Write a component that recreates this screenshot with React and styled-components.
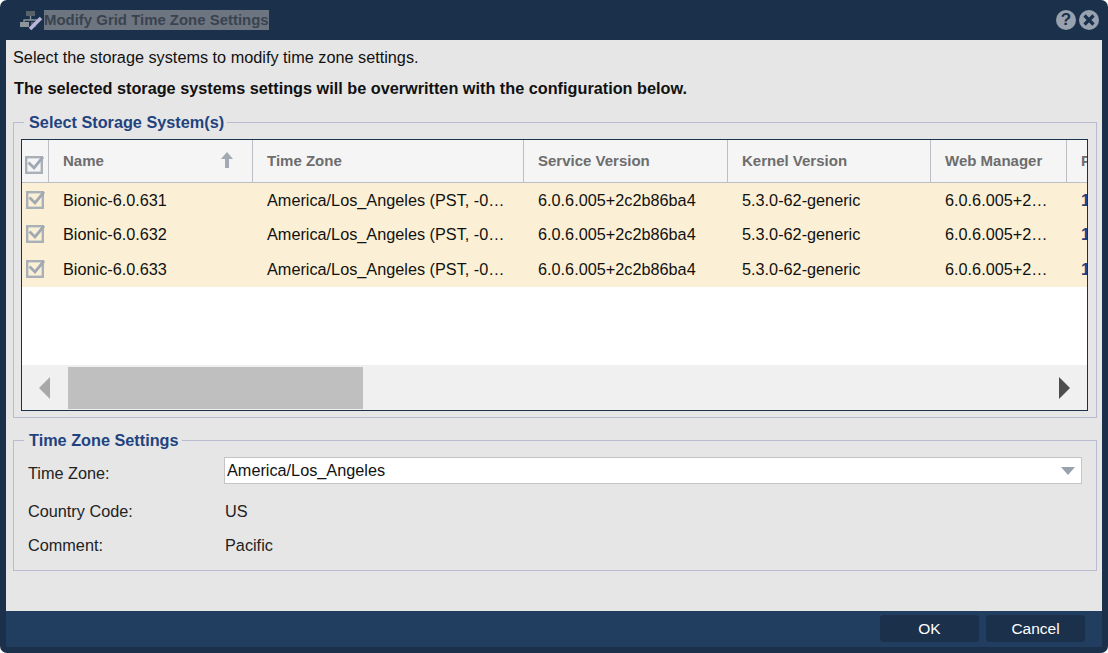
import React from 'react'
import styled, { createGlobalStyle } from 'styled-components'

const columns = '27px 204px 271px 204px 203px 136px 60px'

const rows = [
	{ name: 'Bionic-6.0.631' },
	{ name: 'Bionic-6.0.632' },
	{ name: 'Bionic-6.0.633' }
]

const CheckIcon = ({ size = 19 }) => (
	<svg width={size} height={size} viewBox="0 0 19 19">
		<rect x="1.2" y="2.2" width="15.6" height="15.6" fill="none" stroke="#a9b0b8" strokeWidth="2.4" />
		<path d="M3.5 7.5 L9 13 L18 2" fill="none" stroke="#a0a8b1" strokeWidth="2.8" />
	</svg>
)

const GridLogo = () => (
	<svg width="23" height="20" viewBox="0 0 23 20">
		<rect x="6" y="1" width="9" height="5" fill="#59616b" />
		<path d="M10.5 6 V10 M4 13 V10 H17 V11" fill="none" stroke="#8a929b" strokeWidth="1.4" />
		<rect x="0" y="12" width="9" height="5" fill="#8d949c" />
		<rect x="11" y="12" width="5" height="5" fill="#59616b" />
		<path d="M10 19 L21 8" stroke="#b9b4dc" strokeWidth="3.6" />
	</svg>
)

export default function App() {
	return (
		<>
			<GlobalStyle />
			<Dialog>
				<TitleBar>
					<TitleGroup>
						<GridLogo />
						<TitleText>Modify Grid Time Zone Settings</TitleText>
					</TitleGroup>
					<WindowButtons>
						<WindowButton>?</WindowButton>
						<WindowButton>
							<svg width="14" height="14" viewBox="0 0 14 14">
								<path d="M2.5 2.5 L11.5 11.5 M11.5 2.5 L2.5 11.5" stroke="#1a304b" strokeWidth="3.2" />
							</svg>
						</WindowButton>
					</WindowButtons>
				</TitleBar>

				<Content>
					<Intro>Select the storage systems to modify time zone settings.</Intro>
					<Warning>The selected storage systems settings will be overwritten with the configuration below.</Warning>

					<SystemsGroup>
						<GroupTitle $inset={3}>Select Storage System(s)</GroupTitle>
						<Table>
							<HeaderRow>
								<HeaderCheck><CheckIcon /></HeaderCheck>
								<HeaderCell>
									Name
									<svg width="14" height="18" viewBox="0 0 14 18">
										<path d="M7 1 L13 8 H9 V17 H5 V8 H1 Z" fill="#a2abb4" />
									</svg>
								</HeaderCell>
								<HeaderCell>Time Zone</HeaderCell>
								<HeaderCell>Service Version</HeaderCell>
								<HeaderCell>Kernel Version</HeaderCell>
								<HeaderCell>Web Manager</HeaderCell>
								<HeaderCell $last>P</HeaderCell>
							</HeaderRow>
							<Rows>
								{rows.map((row) => (
									<Row key={row.name}>
										<RowCheck><CheckIcon /></RowCheck>
										<Cell>{row.name}</Cell>
										<Cell>America/Los_Angeles (PST, -0…</Cell>
										<Cell>6.0.6.005+2c2b86ba4</Cell>
										<Cell>5.3.0-62-generic</Cell>
										<Cell>6.0.6.005+2…</Cell>
										<Cell $link>1</Cell>
									</Row>
								))}
							</Rows>
							<ScrollBar>
								<ArrowSlot $dir="left">
									<Arrow $dir="left" />
								</ArrowSlot>
								<ScrollTrack>
									<ScrollThumb />
								</ScrollTrack>
								<ArrowSlot $dir="right">
									<Arrow $dir="right" />
								</ArrowSlot>
							</ScrollBar>
						</Table>
					</SystemsGroup>

					<SettingsGroup>
						<GroupTitle $inset={-5}>Time Zone Settings</GroupTitle>
						<FormGrid>
							<FormLabel $offset>Time Zone:</FormLabel>
							<Combo>
								America/Los_Angeles
								<ComboArrow />
							</Combo>
							<FormLabel>Country Code:</FormLabel>
							<FormValue>US</FormValue>
							<FormLabel>Comment:</FormLabel>
							<FormValue>Pacific</FormValue>
						</FormGrid>
					</SettingsGroup>
				</Content>

				<Footer>
					<FooterButton>OK</FooterButton>
					<FooterButton>Cancel</FooterButton>
				</Footer>
			</Dialog>
		</>
	)
}

const GlobalStyle = createGlobalStyle`
  html, body {
    margin: 0;
    padding: 0;
    background: #fff;
  }
  * {
    box-sizing: border-box;
  }
`

const Dialog = styled.div`
  width: 1108px;
  height: 653px;
  display: flex;
  flex-direction: column;
  padding: 0 6px 6px;
  background: #1a304b;
  border-radius: 7px;
  overflow: hidden;
  font-family: "Liberation Sans", Arial, sans-serif;
  font-size: 16.25px;
  color: #111;
`

const TitleBar = styled.div`
  height: 40px;
  flex: none;
  display: flex;
  align-items: center;
  justify-content: space-between;
  padding: 0 3px 0 14px;
`

const TitleGroup = styled.div`
  display: flex;
  align-items: center;
`

const TitleText = styled.span`
  background: #6d7580;
  color: #39434f;
  font-weight: bold;
  font-size: 14.95px;
  line-height: 20px;
  margin-left: 1px;
`

const WindowButtons = styled.div`
  display: flex;
  gap: 3px;
`

const WindowButton = styled.div`
  width: 20px;
  height: 20px;
  border-radius: 50%;
  background: #98a2ae;
  color: #1a304b;
  font-weight: bold;
  font-size: 17px;
  display: flex;
  align-items: center;
  justify-content: center;
`

const Content = styled.div`
  flex: 1;
  background: #e6e6e6;
  padding: 8px 5px 0 7px;
  display: flex;
  flex-direction: column;
`

const Intro = styled.div`
  line-height: 18px;
`

const Warning = styled.div`
  font-weight: bold;
  line-height: 18px;
  margin: 13px 0 0 1px;
`

const GroupBox = styled.fieldset`
  margin: 0;
  border: 1px solid #b9bcd0;
  min-width: 0;
`

const SystemsGroup = styled(GroupBox)`
  margin-top: 16px;
  height: 305px;
  padding: 8px 8px 5px 7px;
`

const SettingsGroup = styled(GroupBox)`
  margin-top: 13px;
  height: 140px;
  padding: 0 14px 0 15px;
`

const GroupTitle = styled.legend`
  color: #1f437f;
  font-weight: bold;
  font-size: 16.25px;
  padding: 0 3px 0 5px;
  margin-left: ${(p) => p.$inset}px;
  line-height: 18px;
`

const Table = styled.div`
  height: 272px;
  border: 1px solid #1a304b;
  background: #fff;
  overflow: hidden;
  display: flex;
  flex-direction: column;
`

const HeaderRow = styled.div`
  flex: none;
  height: 43px;
  display: grid;
  grid-template-columns: ${columns};
  background: #f5f5f5;
  border-bottom: 1px solid #bcc0c5;
`

const HeaderCheck = styled.div`
  display: flex;
  align-items: center;
  padding: 6px 0 0 3px;
  border-right: 1px solid #bcc0c5;
`

const HeaderCell = styled.div`
  display: flex;
  align-items: center;
  justify-content: space-between;
  padding: 0 18px 2px 14px;
  font-weight: bold;
  font-size: 15px;
  color: #6d6d6d;
  border-right: ${(p) => (p.$last ? 'none' : '1px solid #bcc0c5')};
`

const Rows = styled.div`
  flex: 1;
  background: #fff;
`

const Row = styled.div`
  height: 34.6px;
  display: grid;
  grid-template-columns: ${columns};
  background: #fbf0d5;
  align-items: center;
`

const RowCheck = styled.div`
  display: flex;
  padding: 0 0 2px 4px;
`

const Cell = styled.div`
  padding-left: 14px;
  white-space: nowrap;
  overflow: hidden;
  color: ${(p) => (p.$link ? '#1f437f' : '#111')};
  font-weight: ${(p) => (p.$link ? 'bold' : 'normal')};
`

const ScrollBar = styled.div`
  flex: none;
  height: 45px;
  background: #f0f0f0;
  display: flex;
  align-items: center;
`

const ArrowSlot = styled.div`
  flex: none;
  width: 46px;
  display: flex;
  justify-content: center;
  padding-right: ${(p) => (p.$dir === 'left' ? '2px' : '0')};
`

const Arrow = styled.div`
  width: 0;
  height: 0;
  border-top: 11px solid transparent;
  border-bottom: 11px solid transparent;
  border-right: ${(p) => (p.$dir === 'left' ? '11px solid #a8a8a8' : 'none')};
  border-left: ${(p) => (p.$dir === 'right' ? '11px solid #4d4d4d' : 'none')};
`

const ScrollTrack = styled.div`
  flex: 1;
  height: 42px;
`

const ScrollThumb = styled.div`
  width: 295px;
  height: 100%;
  background: #bfbfbf;
`

const FormGrid = styled.div`
  display: grid;
  grid-template-columns: 196px 1fr;
  grid-template-rows: 27px 34px 34px;
  margin: 8px 0 0 -1px;
  align-items: center;
`

const FormLabel = styled.div`
  padding-top: ${(p) => (p.$offset ? '5px' : '21px')};
  color: #222;
`

const FormValue = styled.div`
  padding: 21px 0 0 1px;
  color: #222;
`

const Combo = styled.div`
  height: 27px;
  background: #fff;
  border: 1px solid #c4c4c4;
  padding: 0 6px 0 2px;
  display: flex;
  align-items: center;
  justify-content: space-between;
`

const ComboArrow = styled.div`
  width: 0;
  height: 0;
  border-left: 7px solid transparent;
  border-right: 7px solid transparent;
  border-top: 8px solid #98a2ae;
`

const Footer = styled.div`
  flex: none;
  height: 36px;
  background: #213e60;
  display: flex;
  justify-content: flex-end;
  align-items: flex-start;
  gap: 7px;
  padding: 4px 17px 0 0;
`

const FooterButton = styled.div`
  width: 99px;
  height: 27px;
  background: #1a304b;
  border-radius: 4px;
  color: #fff;
  font-size: 15.5px;
  display: flex;
  align-items: center;
  justify-content: center;
`
